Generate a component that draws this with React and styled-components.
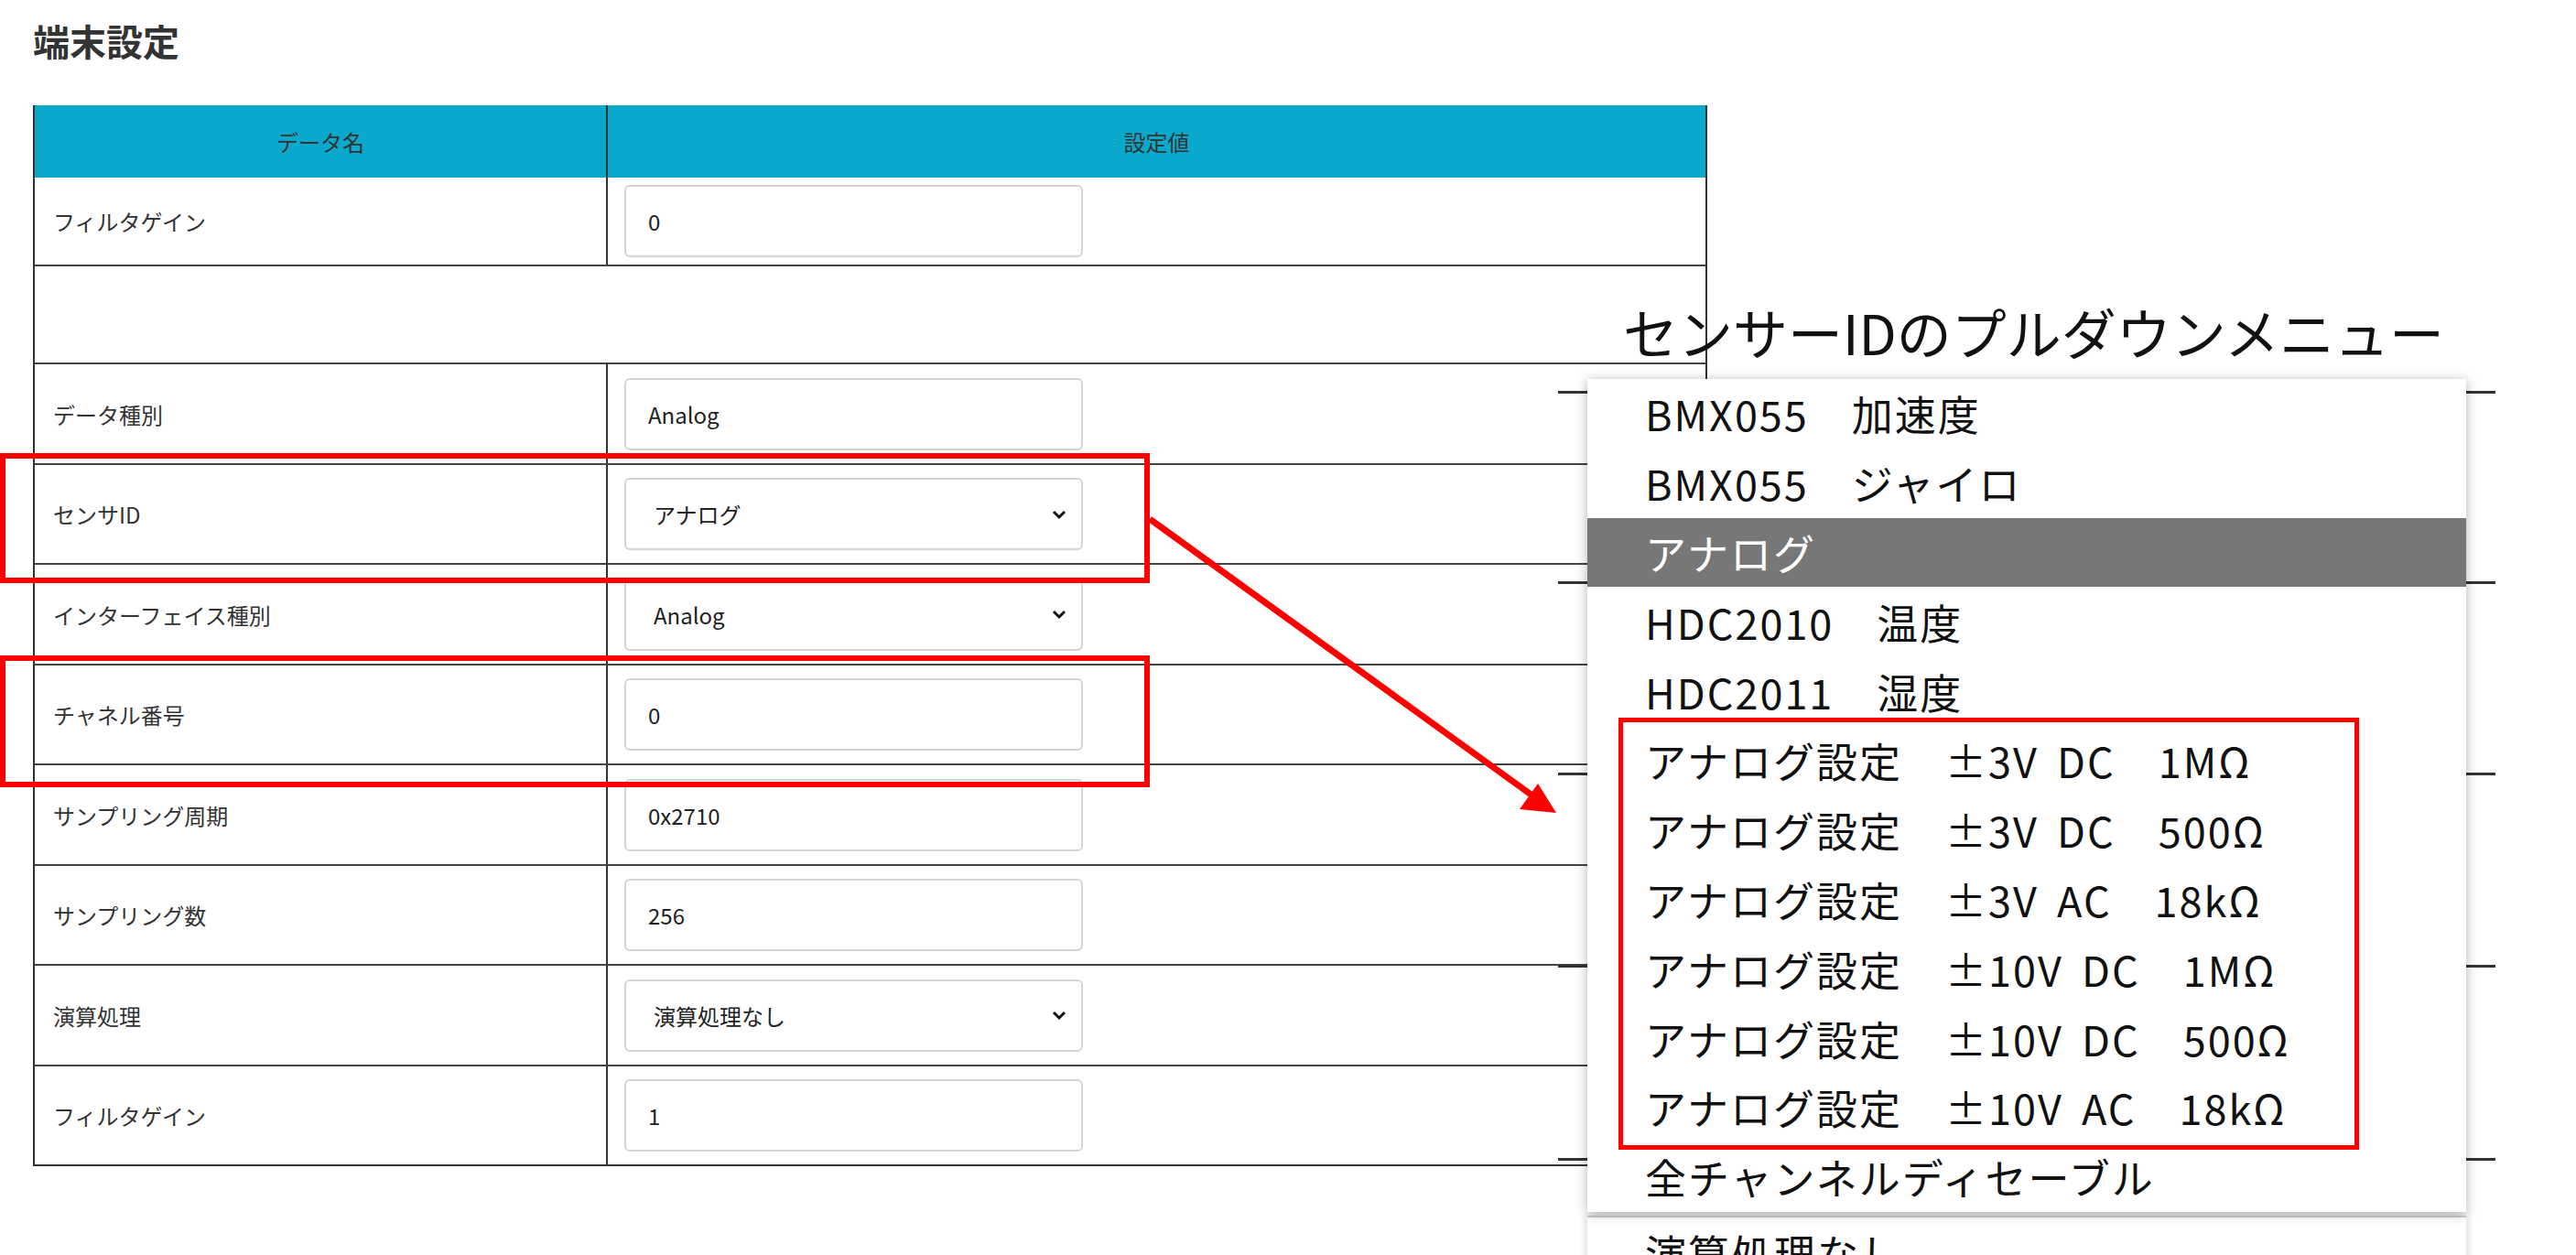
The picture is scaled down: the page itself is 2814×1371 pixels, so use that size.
import React from "react";
import styled, { createGlobalStyle } from "styled-components";

const Global = createGlobalStyle`
  html, body { margin: 0; background: #fff; }
  body { font-family: "Noto Sans CJK JP", "Noto Sans", sans-serif; color: #333; }
`;

const Page = styled.div`
  position: relative;
  width: 2814px;
  height: 1371px;
  overflow: hidden;
  padding: 16px 0 0 36px;
  box-sizing: border-box;
`;

const Title = styled.h1`
  margin: 0 0 43px;
  font-size: 40px;
  font-weight: 700;
  color: #333;
  line-height: 56px;
`;

const Table = styled.div`
  width: 1825px;
  border: 2px solid #333;
  border-top: none;
  display: grid;
  grid-template-columns: 624px 1fr;
`;

const Head = styled.div`
  background: #0aa9cc;
  height: 79px;
  display: flex;
  align-items: center;
  justify-content: center;
  font-size: 24px;
  color: #333;
  border-left: ${(p) => (p.$divider ? "2px solid #333" : "none")};
`;

const Cell = styled.div`
  height: ${(p) => p.$h}px;
  display: flex;
  align-items: center;
  box-sizing: border-box;
  border-top: ${(p) => (p.$first ? "none" : "2px solid #444")};
  border-left: ${(p) => (p.$divider ? "2px solid #333" : "none")};
  padding-left: ${(p) => (p.$divider ? 18 : 20)}px;
  font-size: 24px;
  grid-column: ${(p) => (p.$span ? "1 / span 2" : "auto")};
`;

const Field = styled.div`
  width: 501px;
  height: 79px;
  box-sizing: border-box;
  border: 2px solid #d4d4d4;
  border-radius: 6px;
  display: flex;
  align-items: center;
  justify-content: space-between;
  padding: 0 16px 0 ${(p) => (p.$select ? 30 : 24)}px;
  font-size: 24px;
  color: #222;
`;

const Chevron = () => (
  <svg width="16" height="12" viewBox="0 0 16 12">
    <path d="M2 3 L8 9 L14 3" fill="none" stroke="#111" strokeWidth="3" />
  </svg>
);

const RedBox = styled.div`
  position: absolute;
  border: ${(p) => p.$w}px solid #f00;
  box-sizing: border-box;
`;

const Caption = styled.div`
  position: absolute;
  left: 1773px;
  top: 322px;
  font-size: 60px;
  line-height: 80px;
  color: #111;
  white-space: nowrap;
`;

const Menu = styled.div`
  position: absolute;
  left: 1734px;
  top: 414px;
  width: 960px;
  background: #fff;
  box-shadow: 0 2px 12px rgba(0, 0, 0, 0.3);
`;

const Option = styled.div`
  height: 75.8px;
  display: flex;
  align-items: center;
  padding-left: 63px;
  font-size: 45px;
  letter-spacing: 2px;
  word-spacing: 8px;
  white-space: pre;
  color: ${(p) => (p.$active ? "#fff" : "#111")};
  background: ${(p) => (p.$active ? "#777" : "#fff")};
`;

const Behind = styled.div`
  position: absolute;
  left: 1734px;
  top: 1328px;
  width: 960px;
  height: 60px;
  background: #fff;
  border-top: 2px solid #ccc;
  box-shadow: 0 0 10px rgba(0, 0, 0, 0.2);
  display: flex;
  justify-content: space-between;
  padding: 6px 30px 0 63px;
  box-sizing: border-box;
  font-size: 45px;
  letter-spacing: 2px;
  color: #111;
`;

const Tick = styled.div`
  position: absolute;
  left: ${(p) => p.$x}px;
  top: ${(p) => p.$y}px;
  width: 32px;
  height: 3px;
  background: #333;
`;

const rows = [
  ["フィルタゲイン", "0", false, 95],
  null,
  ["データ種別", "Analog", false, 110],
  ["センサID", "アナログ", true, 109],
  ["インターフェイス種別", "Analog", true, 110],
  ["チャネル番号", "0", false, 109],
  ["サンプリング周期", "0x2710", false, 110],
  ["サンプリング数", "256", false, 109],
  ["演算処理", "演算処理なし", true, 110],
  ["フィルタゲイン", "1", false, 109],
];

const options = [
  "BMX055　加速度",
  "BMX055　ジャイロ",
  "アナログ",
  "HDC2010　温度",
  "HDC2011　湿度",
  "アナログ設定　±3V DC　1MΩ",
  "アナログ設定　±3V DC　500Ω",
  "アナログ設定　±3V AC　18kΩ",
  "アナログ設定　±10V DC　1MΩ",
  "アナログ設定　±10V DC　500Ω",
  "アナログ設定　±10V AC　18kΩ",
  "全チャンネルディセーブル",
];

export default function App() {
  return (
    <Page>
      <Global />
      <Title>端末設定</Title>
      <Table>
        <Head>データ名</Head>
        <Head $divider>設定値</Head>
        {rows.map((r, i) =>
          r === null ? (
            <Cell key={i} $span $h={107} />
          ) : (
            <React.Fragment key={i}>
              <Cell $first={i === 0} $h={r[3]}>{r[0]}</Cell>
              <Cell $first={i === 0} $h={r[3]} $divider>
                <Field $select={r[2]}>
                  <span>{r[1]}</span>
                  {r[2] && <Chevron />}
                </Field>
              </Cell>
            </React.Fragment>
          )
        )}
      </Table>

      <RedBox $w={6} style={{ left: 0, top: 495, width: 1256, height: 142 }} />
      <RedBox $w={6} style={{ left: 0, top: 716, width: 1256, height: 144 }} />

      <svg
        width="2814"
        height="1371"
        style={{ position: "absolute", left: 0, top: 0, pointerEvents: "none" }}
      >
        <line x1="1256" y1="567" x2="1678" y2="872" stroke="#f00" strokeWidth="7" />
        <polygon points="1700,888 1660,884 1680,856" fill="#f00" />
      </svg>

      <Caption>センサーIDのプルダウンメニュー</Caption>

      {[427, 635, 844, 1054, 1265].map((y) => (
        <React.Fragment key={y}>
          <Tick $x={1702} $y={y} />
          <Tick $x={2694} $y={y} />
        </React.Fragment>
      ))}

      <Behind>
        <span>演算処理なし</span>
        <span>⌄</span>
      </Behind>

      <Menu>
        {options.map((o, i) => (
          <Option key={i} $active={i === 2}>{o}</Option>
        ))}
      </Menu>
      <RedBox $w={5} style={{ left: 1768, top: 784, width: 809, height: 472 }} />
    </Page>
  );
}
